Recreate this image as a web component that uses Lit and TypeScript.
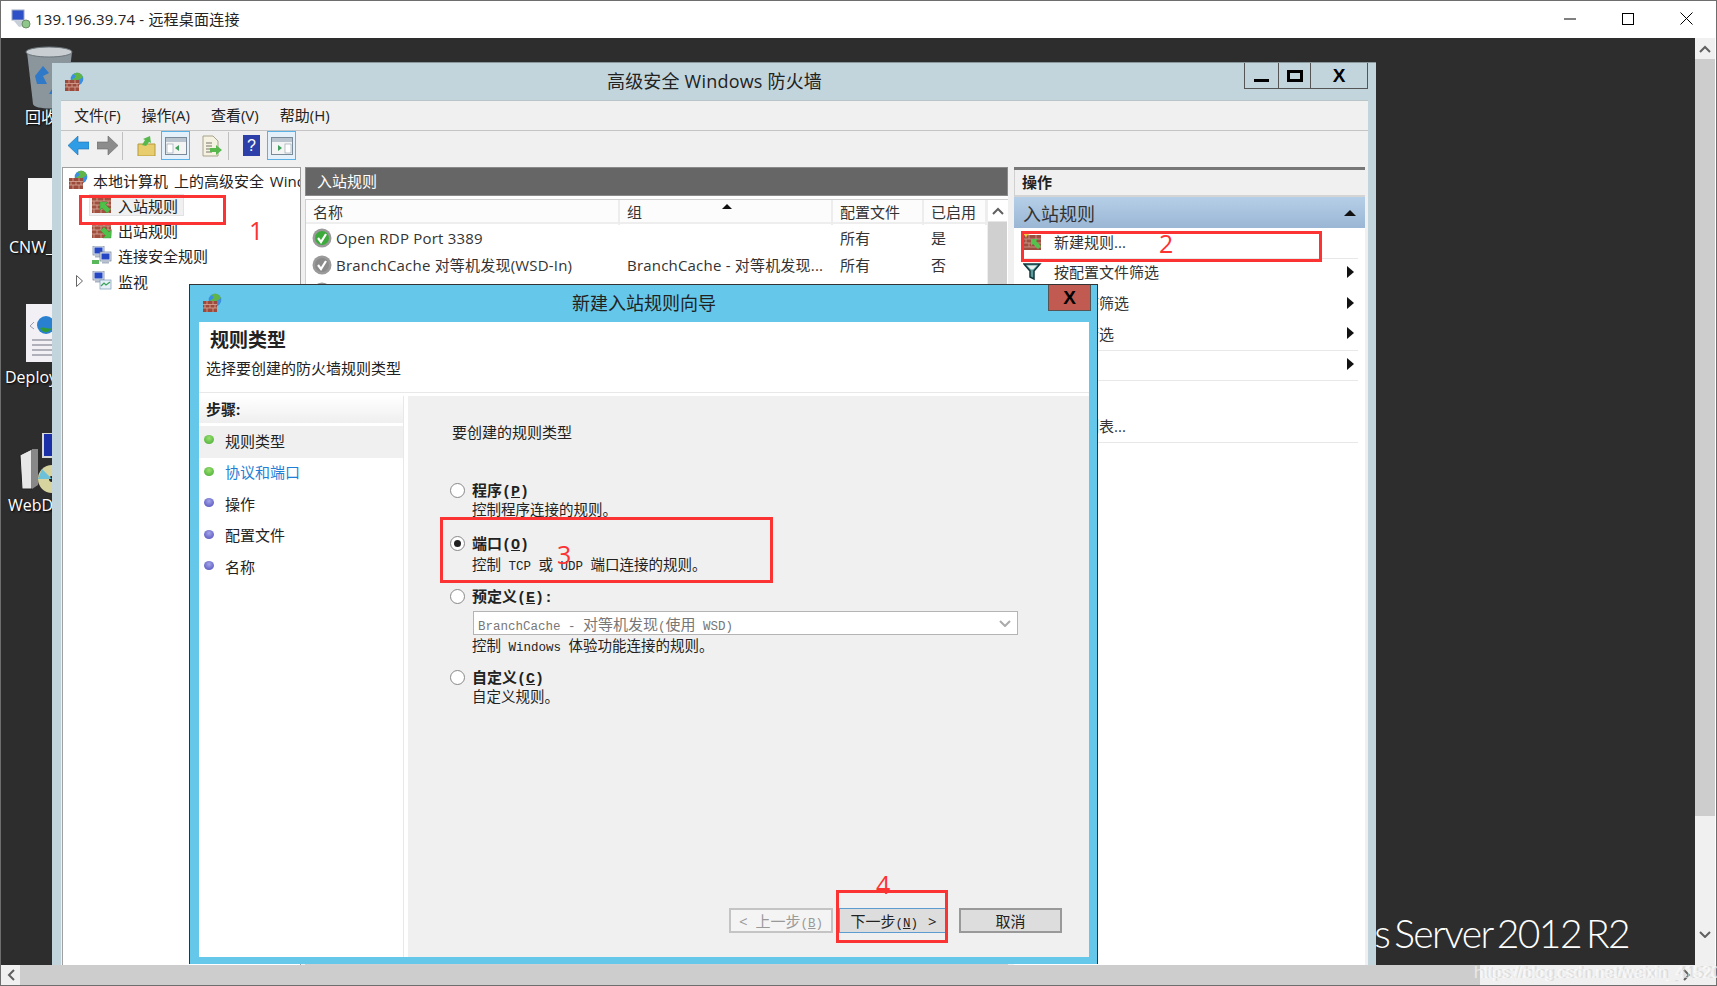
import { LitElement, html, svg, css } from 'lit';
import { customElement } from 'lit/decorators.js';

const bricks = svg`<rect x="1" y="8" width="14" height="11" fill="#9c4a3c"/>
  <path d="M1 11.5h14M1 15h14M5 8v3.5M11 8v3.5M3 11.5V15M8 11.5V15M13 11.5V15M5 15v4M11 15v4" stroke="#d8a898" stroke-width=".8" fill="none"/>`;

// firewall logo: brick wall with a globe behind it
const fwIcon = () => html`<svg class="i20" viewBox="0 0 20 20">
  <circle cx="13" cy="7" r="6.3" fill="#3b8fe0"/>
  <path d="M9 2.5c2 0 3 1 2.5 2.5S9 6 8 8h6c2-1 4-2 5-3-1-2-2-3-4-4-2-.5-4 0-6 1.500z" fill="#5fb548"/>
  ${bricks}
</svg>`;

const wallLarge = svg`<rect x="0" y="2" width="19" height="16" fill="#a0503f"/>
  <path d="M0 6h19M0 10h19M0 14h19M5 2v4M12 2v4M2 6v4M9 6v4M16 6v4M5 10v4M12 10v4M2 14v4M9 14v4M16 14v4" stroke="#d9ab9c" stroke-width=".8" fill="none"/>`;

const inIcon = () => html`<svg class="i20" viewBox="0 0 20 20">${wallLarge}
  <path d="M8 7h8l-2.500 2.500 5 5-3.500 3.500-5-5L8 15z" fill="#4fc04a" stroke="#2d8a33" stroke-width=".4"/>
</svg>`;

const outIcon = () => html`<svg class="i20" viewBox="0 0 20 20">${wallLarge}
  <path d="M19 18h-8l2.500-2.500-5-5 3.500-3.500 5 5 2.500-2.500z" fill="#4fc04a" stroke="#2d8a33" stroke-width=".4"/>
</svg>`;

const newIcon = () => html`<svg class="i20" viewBox="0 0 20 20">
  <rect x="1" y="4" width="17" height="15" fill="#9a4f40"/>
  <path d="M1 8h17M1 12h17M1 16h17M6 4v4M13 4v4M3 8v4M10 8v4M6 12v4M13 12v4" stroke="#cf9f90" stroke-width=".8"/>
  <path d="M8 8h7l-2 2 5 5-3 3-5-5-2 2z" fill="#54c24c"/>
  <path d="M3 0l1 2.500 2.500 1-2.500 1-1 2.500-1-2.500-2.500-1 2.500-1z" fill="#f5c840"/>
</svg>`;

const pc = (x: number, y: number) => svg`<rect x="${x}" y="${y}" width="11" height="9" fill="#dfe6f0" stroke="#6d7c93" stroke-width=".7"/>
  <rect x="${x + 1.5}" y="${y + 1.5}" width="8" height="6" fill="#2647c4"/>
  <rect x="${x + 2}" y="${y + 9.5}" width="7" height="2" fill="#aab4c4"/>`;

const secIcon = () => html`<svg class="i20" viewBox="0 0 20 20">
  ${pc(1, 0)}${pc(8, 6)}
  <path d="M0 14h7v4H0z" fill="#58b85a"/>
</svg>`;

const monIcon = () => html`<svg class="i20" viewBox="0 0 20 20">
  ${pc(1, 0)}
  <rect x="8" y="9" width="11" height="9" fill="#e6f0f6" stroke="#7a9ab5" stroke-width=".7"/>
  <path d="M9 15l3-3 2 2 4-3" stroke="#3aa05a" stroke-width="1.200" fill="none"/>
</svg>`;

const funnel = () => html`<svg class="i20" viewBox="0 0 20 20">
  <path d="M1 2h16l-6 7v8l-4-2V9z" fill="#5c9c9c" stroke="#10383c" stroke-width="1.500"/>
  <path d="M4 3.500h10l-4 4H8z" fill="#e8f2f2"/>
</svg>`;

const check = (color: string, ring: string) => html`<svg class="i20" viewBox="0 0 20 20">
  <circle cx="10" cy="10" r="9.500" fill="${ring}"/>
  <circle cx="10" cy="10" r="7" fill="${color}"/>
  <path d="M6 10l3 4 5-8" stroke="#fff" stroke-width="2.200" fill="none"/>
</svg>`;

const paneIcon = (right: boolean) => html`<svg width="22" height="18" viewBox="0 0 22 18">
  <rect x=".5" y=".5" width="21" height="17" fill="#f4f4f4" stroke="#7a8a99"/>
  <rect x="1" y="1" width="20" height="4" fill="#b9c4cf"/>
  <rect x="${right ? 14 : 2}" y="7" width="6" height="9" fill="#fff" stroke="#8a9aa9" stroke-width=".6"/>
  <path d="${right ? 'M7 8v6l4-3z' : 'M14 8v6l-4-3z'}" fill="#3ea05a"/>
</svg>`;

const chevron = (d: string, color = '#606060') => html`<svg width="12" height="8" viewBox="0 0 12 8"><path d="${d}" stroke="${color}" stroke-width="2" fill="none"/></svg>`;

const TREE = [
  { label: '入站规则', icon: inIcon, sel: true, exp: false },
  { label: '出站规则', icon: outIcon, sel: false, exp: false },
  { label: '连接安全规则', icon: secIcon, sel: false, exp: false },
  { label: '监视', icon: monIcon, sel: false, exp: true },
];

const ACTIONS = [
  { label: '新建规则...', icon: newIcon, more: false, sep: true },
  { label: '按配置文件筛选', icon: funnel, more: true, sep: false },
  { label: '按状态筛选', icon: funnel, more: true, sep: false },
  { label: '按组筛选', icon: funnel, more: true, sep: true },
  { label: '查看', icon: null, more: true, sep: true },
  { label: '刷新', icon: null, more: false, sep: false },
  { label: '导出列表...', icon: null, more: false, sep: true },
  { label: '帮助', icon: null, more: false, sep: false },
];

const STEPS = [
  { label: '规则类型', done: true, cls: 'cur' },
  { label: '协议和端口', done: true, cls: 'link' },
  { label: '操作', done: false, cls: '' },
  { label: '配置文件', done: false, cls: '' },
  { label: '名称', done: false, cls: '' },
];

@customElement('app-root')
export class AppRoot extends LitElement {
  static styles = css`
    :host {
      display: block;
      position: relative;
      width: 1717px;
      height: 986px;
      overflow: hidden;
      font-family: "Open Sans", "Noto Sans CJK SC", sans-serif;
      font-size: 15px;
      color: #222;
    }
    .i20 { width: 20px; height: 20px; flex: none; display: block; }
    .screen {
      box-sizing: border-box;
      height: 986px;
      border: 1px solid #6e6e6e;
      display: grid;
      grid-template-rows: 37px 927px 20px;
      background: #fff;
    }

    /* remote desktop title */
    .rdp-title { display: flex; align-items: center; padding: 0 0 2px 10px; font-size: 15px; color: #222; letter-spacing: .2px; }
    .rdp-title svg { margin-right: 4px; }
    .rdp-btns { margin-left: auto; display: flex; align-items: center; gap: 46px; padding-right: 23px; }
    .rdp-btns svg { display: block; margin: 0; }

    .middle { display: grid; grid-template-columns: 1694px 20px; }
    .desktop { position: relative; background: #2d2d2d; overflow: hidden; }

    .vbar { background: #f0f0f0; display: flex; flex-direction: column; }
    .vbar .cell { height: 21px; display: flex; align-items: center; justify-content: center; flex: none; }
    .vbar .thumb { height: 757px; background: #cdcdcd; flex: none; }
    .vbar .rest { flex: 1; }
    .hbar { background: #f0f0f0; display: flex; }
    .hbar .cell { width: 19px; display: flex; align-items: center; justify-content: center; flex: none; }
    .hbar .thumb { width: 1460px; background: #cdcdcd; flex: none; }
    .hbar .rest { flex: 1; display: flex; justify-content: flex-end; align-items: center; }
    .hbar .arrow { margin-right: 25px; }

    /* desktop shortcuts */
    .dicon { position: absolute; }
    .bin { left: 24px; top: 8px; }
    .cnw { left: 27px; top: 140px; width: 46px; height: 52px; background: #f6f6f6; }
    .dep { left: 25px; top: 266px; }
    .web { left: 17px; top: 395px; }
    .dlabel {
      position: absolute;
      color: #fff;
      font-size: 16px;
      line-height: 20px;
      white-space: nowrap;
      text-shadow: 1px 1px 2px #000;
    }
    .l1 { left: 24px; top: 69px; }
    .l2 { left: 8px; top: 199px; }
    .l3 { left: 4px; top: 329px; }
    .l4 { left: 7px; top: 457px; }
    .server {
      position: absolute;
      right: 66px;
      top: 870px;
      color: #fff;
      font-family: Lato, sans-serif;
      font-size: 39px;
      font-weight: 300;
      line-height: 50px;
      letter-spacing: -1.600px;
      word-spacing: -4px;
      white-space: nowrap;
    }

    /* firewall console window */
    .fw {
      position: absolute;
      left: 51px;
      top: 24px;
      width: 1324px;
      height: 903px;
      box-sizing: border-box;
      background: #c2d5dc;
      border-top: 1px solid #8a979c;
      padding: 0 8px 0 9px;
      display: flex;
      flex-direction: column;
    }
    .fw-title { height: 37px; flex: none; display: flex; align-items: center; justify-content: center; font-size: 18px; color: #222; padding-bottom: 4px; box-sizing: border-box; letter-spacing: .2px; }
    .fw-logo { position: absolute; left: 12px; top: 9px; }
    .caps { position: absolute; right: 8px; top: 0; display: flex; height: 26px; border: 1px solid #555; border-top: 0; box-sizing: border-box; }
    .caps div { display: flex; align-items: center; justify-content: center; border-left: 1px solid #555; }
    .caps div:first-child { border-left: 0; width: 33px; }
    .caps .c2 { width: 31px; }
    .caps .c3 { width: 56px; }
    .xmark { font-family: "Liberation Sans", sans-serif; font-weight: 700; font-size: 19px; color: #000; line-height: 20px; }
    .fw-body { flex: 1; background: #f0f0f0; display: flex; flex-direction: column; min-height: 0; border-top: 1px solid #b8c4c8; }
    .menu { height: 29px; flex: none; box-sizing: content-box; display: flex; align-items: center; padding-left: 13px; gap: 21px; border-bottom: 1px solid #c4c4c4; }
    .menu span { position: relative; bottom: 1px; }
    .toolbar { height: 36px; box-sizing: border-box; padding: 0 0 7px 6px; flex: none; display: flex; align-items: center; }
    .tb { display: flex; align-items: center; justify-content: center; flex: none; }
    .t-back { width: 22px; margin-right: 7px; }
    .t-fwd { width: 22px; margin-right: 4px; }
    .t-sep { width: 1px; height: 28px; background: #c0c0c0; margin-right: 13px; flex: none; }
    .t-folder { width: 20px; margin-right: 5px; }
    .t-on { width: 27px; height: 27px; border: 1px solid #5bb0e5; background: #e4f1fb; margin-right: 11px; }
    .t-doc { width: 22px; margin-right: 5px; }
    .t-help { width: 18px; margin-right: 7px; }
    .panes { flex: 1; display: grid; grid-template-columns: 239px 4px 703px 6px 352px; min-height: 0; padding-left: 1px; }

    .tree { background: #fff; border: 1px solid #a0a0a0; border-bottom: 0; overflow: hidden; white-space: nowrap; }
    .tnode { height: 24.500px; display: flex; align-items: center; gap: 5px; padding-left: 5px; word-spacing: 2px; }
    .titem { height: 25.300px; display: flex; align-items: center; }
    .exp { width: 26px; padding-left: 13px; box-sizing: border-box; flex: none; display: flex; }
    .chip { display: flex; align-items: center; gap: 6px; padding: 0 5px 0 2px; height: 22px; border: 1px solid transparent; box-sizing: border-box; }
    .chip.picked { background: #f0f0f0; border-color: #e2e2e2; }

    .center { display: flex; flex-direction: column; background: #fff; min-width: 0; }
    .phead { height: 29px; flex: none; background: #666; color: #fff; display: flex; align-items: center; padding: 0 0 2px 11px; border: 1px solid #8a8a8a; box-sizing: border-box; }
    .listwrap { flex: 1; display: grid; grid-template-columns: 681px 20px; border: 1px solid #d0d0d0; margin-top: 3px; border-right: 0; }
    .cols { display: grid; grid-template-columns: 314px 213px 91px 63px; height: 22px; background: #fcfcfc; border-bottom: 2px solid #eee; position: relative; }
    .cols div { padding-left: 7px; border-right: 2px solid #ededed; line-height: 25px; box-sizing: border-box; color: #333; }
    .cols div:last-child { border-right: 0; }
    .sort { position: absolute; left: 416px; top: 4px; width: 10px; height: 5px; }
    .row { display: grid; grid-template-columns: 314px 213px 91px 63px; height: 27px; align-items: center; color: #333; letter-spacing: .2px; }
    .row span { padding-left: 7px; white-space: nowrap; overflow: hidden; }
    .row .first { display: flex; align-items: center; gap: 4px; padding-left: 6px; }
    .lscroll { background: #e6e6e6; border-left: 1px solid #eee; display: flex; flex-direction: column; }
    .lscroll .up { height: 21px; background: #fff; display: flex; align-items: center; justify-content: center; flex: none; }
    .lscroll .th { flex: 1; background: #d0d0d0; margin-top: 1px; }

    .actions { background: #fff; border-right: 1px solid #f0f0f0; }
    .a-top { height: 3px; background: #777; }
    .a-head { height: 25px; background: #f0f0f0; font-weight: 700; line-height: 25px; padding-left: 7px; border-bottom: 2px solid #d4d4d4; border-left: 1px solid #d0d0d0; }
    .a-sec { height: 31px; background: linear-gradient(#b6cfe8, #9ab6d4); font-size: 18px; display: flex; align-items: center; padding: 0 9px 0 9px; justify-content: space-between; color: #333; }
    .a-row { height: 30.670px; box-sizing: border-box; display: flex; align-items: center; padding: 0 11px 4px 9px; color: #333; position: relative; }
    .a-row .slot { width: 20px; margin-right: 11px; flex: none; }
    .a-row .more { margin-left: auto; }
    .a-row.sep::after { content: ""; position: absolute; left: 9px; right: 7px; bottom: 0; height: 1px; background: #e8e8e8; }

    /* wizard dialog */
    .dlg {
      position: absolute;
      left: 188px;
      top: 246px;
      width: 909px;
      height: 680px;
      box-sizing: border-box;
      background: #65c7e9;
      border: 1px solid #333;
      border-bottom: 0;
      padding: 0 8px 7px 9px;
      display: flex;
      flex-direction: column;
    }
    .dlg-title { height: 37px; flex: none; box-sizing: border-box; padding-bottom: 4px; display: flex; align-items: center; justify-content: center; font-size: 18px; color: #222; }
    .dlg-logo { position: absolute; left: 12px; top: 8px; }
    .dlg-x { position: absolute; right: 6px; top: 0; width: 43px; height: 26px; box-sizing: border-box; background: #c15a50; border: 1px solid #555; border-top: 0; display: flex; align-items: center; justify-content: center; }
    .dlg-body { flex: 1; background: #fff; display: flex; flex-direction: column; min-height: 0; }
    .dlg-head { height: 71px; flex: none; box-sizing: border-box; border-bottom: 1px solid #e8e8e8; }
    .dlg-h1 { font-size: 19px; font-weight: 700; line-height: 26px; padding: 5px 0 0 11px; }
    .dlg-h2 { font-size: 15px; line-height: 22px; padding: 4px 0 0 7px; }
    .dlg-main { flex: 1; display: grid; grid-template-columns: 205px 1fr; column-gap: 4px; margin-top: 3px; min-height: 0; }
    .steps { background: #fff; border-right: 1px solid #e8e8e8; }
    .s-head { height: 27px; background: linear-gradient(#fff, #efefef); font-weight: 700; line-height: 27px; padding-left: 7px; margin-bottom: 3px; }
    .step { height: 31.500px; box-sizing: border-box; padding: 0 0 3px 5px; display: flex; align-items: center; gap: 11px; }
    .step.cur { background: #f0f0f0; }
    .step.link { color: #1f7fd6; }
    .dot { width: 10px; height: 9px; border-radius: 50%; flex: none; margin-top: -1px; }
    .dot.g { background: radial-gradient(circle at 50% 35%, #9be070, #3fa82f); }
    .dot.b { background: radial-gradient(circle at 50% 35%, #a5a5ea, #4a4ab8); }
    .form { background: #f0f0f0; padding: 26px 27px 24px 42px; display: flex; flex-direction: column; min-height: 0; font-size: 14.500px; }
    .lead { line-height: 20px; font-size: 15px; padding-left: 2px; margin-bottom: 38px; }
    .opt { height: 53px; flex: none; }
    .opt.tall { height: 81px; }
    .opt-label { display: flex; align-items: center; height: 20px; font-weight: 700; font-size: 15px; gap: 7px; }
    .radio { width: 15px; height: 15px; box-sizing: border-box; border: 1px solid #888; border-radius: 50%; background: #fff; flex: none; display: flex; align-items: center; justify-content: center; }
    .radio.on::after { content: ""; width: 7px; height: 7px; border-radius: 50%; background: #222; }
    .desc { line-height: 20px; padding-left: 22px; white-space: pre; }
    .desc.d2 { margin-top: 2px; }
    .desc.d1 { margin-top: 1px; }
    .m { font-family: "Liberation Mono", monospace; font-size: 12.500px; }
    .k { font-family: "Liberation Mono", monospace; font-size: 15px; }
    .combo {
      margin: 5px 0 0 23px;
      width: 545px;
      height: 24px;
      box-sizing: border-box;
      background: #fff;
      border: 1px solid #b4b4b4;
      color: #777;
      display: flex;
      align-items: center;
      justify-content: space-between;
      padding: 0 6px 0 4px;
      font-size: 15px;
      white-space: pre;
    }
    .btns { margin-top: auto; display: flex; justify-content: flex-end; }
    .btn { height: 25px; box-sizing: border-box; border: 2px solid #999; background: #ddd; display: flex; align-items: center; justify-content: center; gap: 10px; flex: none; color: #222; font-size: 15px; }
    .b-prev { width: 104px; background: #f4f4f4; border-color: #c4c4c4; color: #999; margin-right: 6px; gap: 8px; }
    .b-next { width: 109px; border: 1px solid #5d9cd0; margin-right: 11px; }
    .b-can { width: 103px; }

    /* red marks somebody drew on the screenshot */
    .box { position: absolute; border: 3px solid #fb3333; box-sizing: border-box; }
    .bx1 { left: 78px; top: 157px; width: 147px; height: 30px; }
    .bx2 { left: 1020px; top: 193px; width: 301px; height: 31px; }
    .bx3 { left: 439px; top: 479px; width: 333px; height: 66px; }
    .bx4 { left: 835px; top: 852px; width: 112px; height: 53px; }
    .num { position: absolute; color: #fb3333; font-size: 25px; line-height: 30px; font-family: "Open Sans", sans-serif; }
    .n1 { left: 248px; top: 177px; }
    .n2 { left: 1158px; top: 190px; }
    .n3 { left: 556px; top: 501px; }
    .n4 { left: 875px; top: 831px; }

    .wm {
      position: absolute;
      left: 1474px;
      top: 963px;
      font-family: "Liberation Sans", sans-serif;
      font-size: 16px;
      line-height: 20px;
      color: rgba(255, 255, 255, .6);
      text-shadow: 3px 0 0 rgba(200, 200, 200, .5);
      white-space: nowrap;
    }
  `;

  renderDesktop() {
    return html`
      <svg class="dicon bin" width="48" height="68" viewBox="0 0 48 68">
        <path d="M2 6l6 52c1 6 32 6 33 0l6-52z" fill="#8a959c"/>
        <ellipse cx="24" cy="6" rx="23" ry="5" fill="#c8ced2" stroke="#6d767c"/>
        <path d="M10 30l8-10 6 7-6 3 4 8H12zM30 38l8 2-3 8H24z" fill="#2f79c8"/>
      </svg>
      <div class="dlabel l1">回收站</div>
      <div class="dicon cnw"></div>
      <div class="dlabel l2">CNW_Setup</div>
      <svg class="dicon dep" width="48" height="58" viewBox="0 0 48 58">
        <rect width="48" height="58" fill="#f2f0f4"/>
        <circle cx="20" cy="21" r="9" fill="#2a80d0"/>
        <path d="M14 24c4-2 8 2 12 0-2 4-8 7-12 0z" fill="#2f9a3a"/>
        <path d="M8 18l-4 4 4 3" stroke="#9a9ab0" fill="none"/>
        <path d="M6 36h40M6 41h40M6 46h40M6 51h40" stroke="#9a9aa8" stroke-width="1.500"/>
      </svg>
      <div class="dlabel l3">Deployment</div>
      <svg class="dicon web" width="40" height="60" viewBox="0 0 40 60">
        <path d="M2 22l12-6v40H4z" fill="#e8e8e8" stroke="#222"/>
        <path d="M14 16h6v36l-6 4z" fill="#888"/>
        <rect x="25" y="0" width="14" height="24" fill="#1a2fa8" stroke="#d8d8d8" stroke-width="2"/>
        <circle cx="34" cy="46" r="14" fill="#d8d4a0"/>
        <circle cx="34" cy="46" r="3" fill="#222"/>
        <path d="M24 36l10 10-14 0z" fill="#6cc0d8"/>
      </svg>
      <div class="dlabel l4">WebDeploy</div>
      <div class="server">Windows Server 2012 R2</div>
    `;
  }

  renderFirewall() {
    return html`
      <div class="fw">
        <div class="fw-logo">${fwIcon()}</div>
        <div class="fw-title">高级安全 Windows 防火墙</div>
        <div class="caps">
          <div><svg width="16" height="16" viewBox="0 0 16 16"><rect x="0" y="11" width="15" height="3" fill="#000"/></svg></div>
          <div class="c2"><svg width="16" height="12" viewBox="0 0 16 12"><rect x="1.500" y="1.500" width="13" height="9" fill="none" stroke="#000" stroke-width="3"/></svg></div>
          <div class="c3"><span class="xmark">X</span></div>
        </div>
        <div class="fw-body">
          <div class="menu">
            <span>文件(F)</span><span>操作(A)</span><span>查看(V)</span><span>帮助(H)</span>
          </div>
          <div class="toolbar">
            <div class="tb t-back"><svg width="21" height="21" viewBox="0 0 21 21"><path d="M0 10.500L10 1v6h11v7H10v6z" fill="#2f9de6" stroke="#1d6fb0" stroke-width=".6"/></svg></div>
            <div class="tb t-fwd"><svg width="21" height="21" viewBox="0 0 21 21"><path d="M21 10.500L11 1v6H0v7h11v6z" fill="#8c8c8c" stroke="#6a6a6a" stroke-width=".6"/></svg></div>
            <div class="t-sep"></div>
            <div class="tb t-folder"><svg width="19" height="20" viewBox="0 0 19 20"><path d="M1 8h17v12H1z" fill="#e8cd6e" stroke="#b59a3a"/><path d="M5 9l3-5-2-1 7-3 1 7-2-1-3 4z" fill="#58b84e"/></svg></div>
            <div class="tb t-on">${paneIcon(false)}</div>
            <div class="tb t-doc"><svg width="22" height="22" viewBox="0 0 22 22"><path d="M2 1h10l5 5v15H2z" fill="#f6f2e2" stroke="#a8a28a"/><path d="M5 8h6M5 11h6M5 14h6M5 17h6" stroke="#77756a"/><path d="M9 13h6v-3l6 5-6 5v-3H9z" fill="#58b84e"/></svg></div>
            <div class="t-sep"></div>
            <div class="tb t-help"><svg width="17" height="21" viewBox="0 0 17 21"><rect width="17" height="21" fill="#2d3fa8"/><text x="8.500" y="16" text-anchor="middle" font-size="16" font-family="Liberation Sans" fill="#fff">?</text></svg></div>
            <div class="tb t-on">${paneIcon(true)}</div>
          </div>
          <div class="panes">
            <div class="tree">
              <div class="tnode">${fwIcon()}<span>本地计算机 上的高级安全 Windows Defender 防火墙</span></div>
              ${TREE.map(t => html`
                <div class="titem">
                  <span class="exp">${t.exp ? html`<svg width="7" height="12" viewBox="0 0 7 12"><path d="M.5.500l6 5.500-6 5.500z" fill="#fff" stroke="#666"/></svg>` : ''}</span>
                  <span class="chip ${t.sel ? 'picked' : ''}">${t.icon()}<span>${t.label}</span></span>
                </div>`)}
            </div>
            <div></div>
            <div class="center">
              <div class="phead">入站规则</div>
              <div class="listwrap">
                <div>
                  <div class="cols">
                    <div>名称</div><div>组</div><div>配置文件</div><div>已启用</div>
                    <svg class="sort" viewBox="0 0 10 5"><path d="M5 0l5 5H0z" fill="#111"/></svg>
                  </div>
                  <div class="row">
                    <span class="first">${check('#3cab3c', '#9a9a9a')}Open RDP Port 3389</span><span></span><span>所有</span><span>是</span>
                  </div>
                  <div class="row">
                    <span class="first">${check('#8a8a8a', '#9a9a9a')}BranchCache 对等机发现(WSD-In)</span><span>BranchCache - 对等机发现...</span><span>所有</span><span>否</span>
                  </div>
                  <div class="row">
                    <span class="first">${check('#8a8a8a', '#9a9a9a')}</span>
                  </div>
                </div>
                <div class="lscroll">
                  <div class="up">${chevron('M1 7l5-5 5 5')}</div>
                  <div class="th"></div>
                </div>
              </div>
            </div>
            <div></div>
            <div class="actions">
              <div class="a-top"></div>
              <div class="a-head">操作</div>
              <div class="a-sec">入站规则<svg width="12" height="6" viewBox="0 0 12 6"><path d="M6 0l6 6H0z" fill="#111"/></svg></div>
              ${ACTIONS.map(a => html`
                <div class="a-row ${a.sep ? 'sep' : ''}">
                  <span class="slot">${a.icon ? a.icon() : ''}</span>
                  <span>${a.label}</span>
                  ${a.more ? html`<svg class="more" width="7" height="12" viewBox="0 0 7 12"><path d="M0 0l7 6-7 6z" fill="#111"/></svg>` : ''}
                </div>`)}
            </div>
          </div>
        </div>
      </div>
    `;
  }

  renderWizard() {
    return html`
      <div class="dlg">
        <div class="dlg-logo">${fwIcon()}</div>
        <div class="dlg-title">新建入站规则向导</div>
        <div class="dlg-x"><span class="xmark">X</span></div>
        <div class="dlg-body">
          <div class="dlg-head">
            <div class="dlg-h1">规则类型</div>
            <div class="dlg-h2">选择要创建的防火墙规则类型</div>
          </div>
          <div class="dlg-main">
            <div class="steps">
              <div class="s-head">步骤:</div>
              ${STEPS.map(s => html`
                <div class="step ${s.cls}"><span class="dot ${s.done ? 'g' : 'b'}"></span>${s.label}</div>`)}
            </div>
            <div class="form">
              <div class="lead">要创建的规则类型</div>
              <div class="opt">
                <div class="opt-label"><span class="radio"></span><span>程序<span class="k">(<u>P</u>)</span></span></div>
                <div class="desc">控制程序连接的规则。</div>
              </div>
              <div class="opt">
                <div class="opt-label"><span class="radio on"></span><span>端口<span class="k">(<u>O</u>)</span></span></div>
                <div class="desc d2">控制<span class="m"> TCP </span>或<span class="m"> UDP </span>端口连接的规则。</div>
              </div>
              <div class="opt tall">
                <div class="opt-label"><span class="radio"></span><span>预定义<span class="k">(<u>E</u>):</span></span></div>
                <div class="combo"><span><span class="m">BranchCache - </span>对等机发现<span class="m">(</span>使用<span class="m"> WSD)</span></span>${chevron('M1 2l5 5 5-5', '#aaa')}</div>
                <div class="desc d1">控制<span class="m"> Windows </span>体验功能连接的规则。</div>
              </div>
              <div class="opt">
                <div class="opt-label"><span class="radio"></span><span>自定义<span class="k">(<u>C</u>)</span></span></div>
                <div class="desc">自定义规则。</div>
              </div>
              <div class="btns">
                <div class="btn b-prev"><span>&lt;</span><span>上一步<span class="m">(<u>B</u>)</span></span></div>
                <div class="btn b-next"><span>下一步<span class="m">(<u>N</u>)</span></span><span>&gt;</span></div>
                <div class="btn b-can">取消</div>
              </div>
            </div>
          </div>
        </div>
      </div>
    `;
  }

  render() {
    return html`
      <div class="screen">
        <div class="rdp-title">
          <svg width="20" height="20" viewBox="0 0 20 20">
            <rect x="1" y="1" width="12" height="10" fill="#2d50c8" stroke="#9aa7bd"/>
            <path d="M3 12l9 0 5 4-9 2z" fill="#c8ced8"/>
            <circle cx="15" cy="15" r="4" fill="#8fc68a" stroke="#6a8f6a"/>
          </svg>
          <span>139.196.39.74 - 远程桌面连接</span>
          <div class="rdp-btns">
            <svg width="12" height="12" viewBox="0 0 12 12"><path d="M0 6h12" stroke="#000"/></svg>
            <svg width="12" height="12" viewBox="0 0 12 12"><rect x=".5" y=".5" width="11" height="11" fill="none" stroke="#000"/></svg>
            <svg width="13" height="13" viewBox="0 0 13 13"><path d="M.5.500l12 12M12.500.500l-12 12" stroke="#000"/></svg>
          </div>
        </div>
        <div class="middle">
          <div class="desktop">
            ${this.renderDesktop()}
            ${this.renderFirewall()}
            ${this.renderWizard()}
            <div class="box bx1"></div><div class="num n1">1</div>
            <div class="box bx2"></div><div class="num n2">2</div>
            <div class="box bx3"></div><div class="num n3">3</div>
            <div class="box bx4"></div><div class="num n4">4</div>
          </div>
          <div class="vbar">
            <div class="cell">${chevron('M1 7l5-5 5 5')}</div>
            <div class="thumb"></div>
            <div class="rest"></div>
            <div class="cell">${chevron('M1 2l5 5 5-5')}</div>
            <div class="cell"></div>
          </div>
        </div>
        <div class="hbar">
          <div class="cell"><svg width="8" height="12" viewBox="0 0 8 12"><path d="M7 1L2 6l5 5" stroke="#606060" stroke-width="2" fill="none"/></svg></div>
          <div class="thumb"></div>
          <div class="rest">
            <svg class="arrow" width="8" height="12" viewBox="0 0 8 12"><path d="M1 1l5 5-5 5" stroke="#606060" stroke-width="2" fill="none"/></svg>
          </div>
        </div>
      </div>
      <div class="wm">https://blog.csdn.net/weixin_41520dlf</div>
    `;
  }
}
